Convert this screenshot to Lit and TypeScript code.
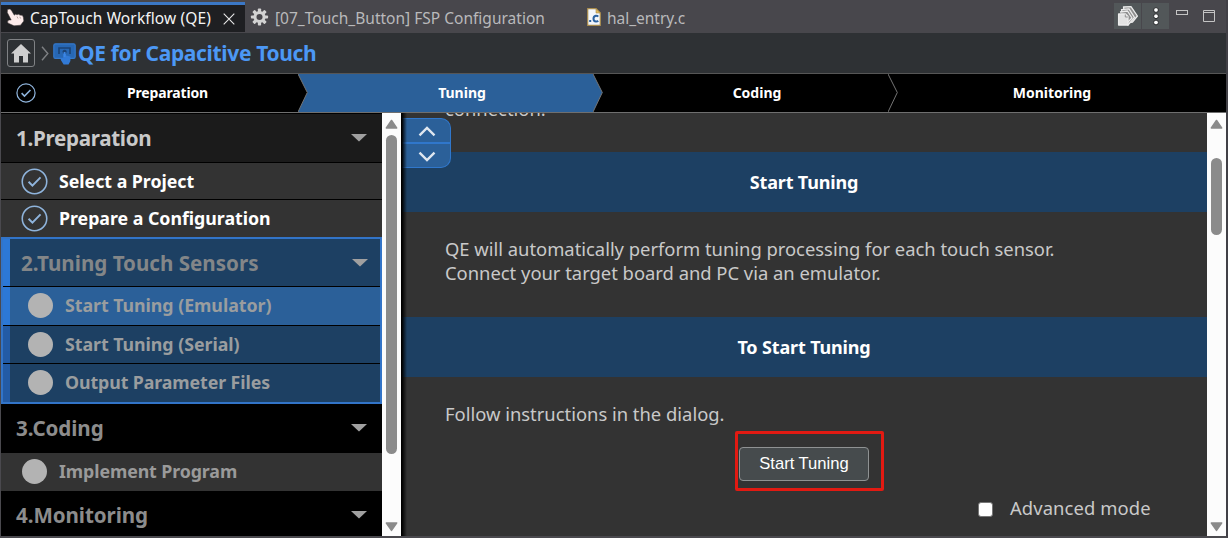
import { LitElement, html, svg, css, nothing } from "lit";
import { customElement } from "lit/decorators.js";
import { classMap } from "lit/directives/class-map.js";

interface Task {
  label: string;
  cls: string;
  done?: boolean;
  active?: boolean;
}
interface Section {
  title: string;
  cls: string;
  tasks: Task[];
}

const sections: Section[] = [
  {
    title: "1.Preparation",
    cls: "prep",
    tasks: [
      { label: "Select a Project", cls: "t1", done: true },
      { label: "Prepare a Configuration", cls: "t2", done: true },
    ],
  },
  {
    title: "2.Tuning Touch Sensors",
    cls: "tuning",
    tasks: [
      { label: "Start Tuning (Emulator)", cls: "t3", active: true },
      { label: "Start Tuning (Serial)", cls: "t4" },
      { label: "Output Parameter Files", cls: "t5" },
    ],
  },
  { title: "3.Coding", cls: "coding", tasks: [{ label: "Implement Program", cls: "t6" }] },
  { title: "4.Monitoring", cls: "monitoring", tasks: [] },
];

const steps = ["Preparation", "Tuning", "Coding", "Monitoring"];

const check = (size: number, stroke: number) => html`
  <svg class="check" width=${size} height=${size} viewBox="0 0 26 26" fill="none" stroke="#8fb4dc">
    <circle cx="13" cy="13" r="11.8" stroke-width=${stroke} />
    <path d="M7.3 13.2 L11 17 L18.8 9" stroke-width=${stroke * 1.25} />
  </svg>
`;

@customElement("scroll-bar")
export class ScrollBar extends LitElement {
  static styles = css`
    :host { display: flex; flex: none; flex-direction: column; align-items: center; width: 19px; background: #fcfcfc; box-sizing: border-box; padding: 6px 0 4px; }
    svg { display: block; flex: none; }
    .track { flex: 1; width: 11px; display: flex; flex-direction: column; }
    ::slotted(*) { width: 11px; border-radius: 6px; background: #8b8b8b; }
  `;
  render() {
    return html`
      <svg width="13" height="11"><path d="M6.5 1.5 L11.6 9 H1.4 Z" fill="#8b8b8b" stroke="#8b8b8b" stroke-width="1.6" stroke-linejoin="round" /></svg>
      <div class="track"><slot></slot></div>
      <svg width="13" height="11"><path d="M6.5 9.3 L11.6 2 H1.4 Z" fill="#8b8b8b" stroke="#8b8b8b" stroke-width="1.6" stroke-linejoin="round" /></svg>
    `;
  }
}

@customElement("app-root")
export class AppRoot extends LitElement {
  static styles = css`
    * { box-sizing: border-box; }
    :host { box-sizing: border-box; display: flex; flex-direction: column; width: 1228px; height: 538px; overflow: hidden; background: #2e3134; border: solid #4a494e; border-width: 0 2px 2px 1px; border-right-color: #414046; font-family: "Noto Sans", "Open Sans", sans-serif; color: #fff; white-space: nowrap; }
    svg { display: block; flex: none; }

    .tabs { display: flex; flex: none; height: 33px; background: #48474c; padding-top: 2px; font-size: 15.5px; color: #b9b9bb; }
    .tab { display: flex; align-items: center; padding-bottom: 1px; }
    .tab.active { width: 244px; height: 30px; background: #1e1f22; border-top: 3px solid #3b78c6; color: #f4f4f4; padding: 0 0 0 5px; }
    .tab.active svg.hand { margin-right: 5px; margin-bottom: 2px; }
    .tab.active svg.close { margin-left: 12px; }
    .tab span { line-height: 22px; padding-top: 2px; }
    .tab.active span { padding: 0 0 1px; }
    .captouch { width: 181px; letter-spacing: .12px; }
    .fsp { margin: 0 41px 0 6px; width: 271px; letter-spacing: .01px; }
    .tab.second { padding-left: 5px; }
    .hal { margin-left: 6px; letter-spacing: -.02px; }
    .tools { margin-left: auto; display: flex; padding-top: 1px; padding-right: 11px; }
    .tool { width: 27px; height: 26px; background: #525759; display: flex; align-items: center; justify-content: center; margin-right: 1px; }
    .tools .min { margin: 7px 0 0 6px; }
    .tools .max { margin: 7px 0 0 15px; }

    .crumbs { display: flex; flex: none; height: 40px; align-items: center; padding: 0 0 0 6px; }
    .home { width: 28px; height: 28px; border: 1px solid #808285; border-radius: 3px; display: flex; align-items: center; justify-content: center; }
    .crumbs .gt { margin: 0 4px 0 6px; }
    .pad { margin-top: 2px; }
    .title { font-size: 21px; font-weight: 700; letter-spacing: -.34px; color: #4c98f5; margin-left: 2px; line-height: 36px; }

    .steps { display: grid; flex: none; grid-template-columns: 297px 295px 295px 1fr; height: 40px; border: solid #6f6f6f; border-width: 1px 0 1px; border-top-color: #565656; background: #000; }
    .step { display: flex; align-items: center; justify-content: center; position: relative; font-weight: 700; font-size: 14px; padding-left: 33px; }
    .step span { margin-bottom: 2px; }
    .step:first-child { padding-left: 15px; justify-content: flex-start; }
    .step:first-child span { margin-left: 91px; letter-spacing: -.16px; }
    .step:last-child { padding: 0 10px 0 0; }
    .step.active { background: #2b6099; }
    .step .tip { position: absolute; right: -10px; top: 0; z-index: 1; }

    .work { display: flex; flex: 1; min-height: 0; }
    .side { width: 381px; overflow: hidden; padding-top: 1px; background: #000; flex: none; }
    .head { display: flex; align-items: center; justify-content: space-between; height: 49px; padding: 0 15px 0 15px; font-size: 20.6px; font-weight: 700; color: #8c8c8c; border-bottom: 1px solid #000; background: #000; }
    .head span { letter-spacing: -.08px; }
    .prep .head { background: #1b1b1b; color: #c9c9c9; }
    .prep .head span { letter-spacing: -.3px; }
    .task { display: flex; align-items: center; height: 37px; background: #333; border-bottom: 1px solid #000; font-size: 17.8px; font-weight: 700; color: #9a9a9a; padding-left: 20px; }
    .task span { margin: 0 0 1px 11px; letter-spacing: -.1px; }
    .task.done { color: #fff; }
    .prep .task:last-child { border-bottom: 0; }
    .dot { width: 25px; height: 25px; border-radius: 50%; background: #b3b3b3; margin: 0 1px; }
    .tuning { border: 2px solid #3274c8; }
    .tuning .head { height: 48px; background: #1d4063; box-shadow: inset 7px 0 #2c78d6; padding: 0 12px 0 18px; color: #838688; }
    .tuning .head span { letter-spacing: 0; }
    .tuning .task { background: #1d4063; box-shadow: inset 7px 0 #235ba5; height: 38px; padding: 0 0 1px 24px; color: #9a9d9f; }
    .tuning .task.active { background: #2b6099; box-shadow: inset 7px 0 #2c78d6; height: 39px; padding-bottom: 2px; }
    .tuning .task:last-child { border-bottom: 0; height: 38px; padding-bottom: 2px; }
    .coding .task { height: 38px; border-bottom: 0; padding-bottom: 1px; }
    .coding .head { border-bottom: 0; padding-bottom: 1px; }
    .task.t3 span, .task.t4 span { letter-spacing: -.04px; }
    .task.t1 span, .task.t2 span { letter-spacing: -.03px; }
    .thumb-side { height: 319px; margin-top: 5px; }
    .thumb-main { height: 77px; margin-top: 28px; }

    .main { position: relative; flex: 1; min-width: 0; overflow: hidden; background: #333; color: #c9c9c9; font-size: 18.4px; line-height: 24px; }
    .main::before { content: ""; position: absolute; z-index: 3; left: 0; top: 0; bottom: 0; width: 6px; background: linear-gradient(90deg, #000 15%, rgba(0,0,0,0)); }
    .cut { height: 39px; padding-left: 44px; overflow: hidden; }
    .cut p { margin: -16px 0 0; }
    .band { height: 60px; background: #1d4063; color: #fff; font-weight: 700; font-size: 18px; letter-spacing: -.15px; line-height: 61px; text-align: center; }
    .desc { height: 105px; padding: 25px 44px 0; letter-spacing: -.01px; }
    .run { padding: 25px 44px 0; }
    .frame { display: flex; width: 149px; height: 60px; margin: 5px 0 0 290px; border: 3px solid #e21a12; border-radius: 2px; padding: 13px 0 0 1px; }
    button { width: 130px; height: 34px; border: 1px solid #8f9293; border-radius: 4px; background: #464b4d; color: #fff; font: 16.6px "Liberation Sans", Arial, sans-serif; padding: 0; }
    .adv { display: flex; align-items: center; margin: 5px 0 0 533px; }
    .adv i { width: 15px; height: 15px; border: 1px solid #767676; border-radius: 3px; background: #fff; margin: 2px 17px 0 0; }
    .adv span { letter-spacing: .1px; }
    .jump { position: absolute; z-index: 2; left: 0; top: 5px; width: 50px; height: 50px; background: #2b6099; border: 1px solid #3077cb; border-left: 0; border-radius: 0 10px 10px 0; display: flex; flex-direction: column; }
    .jump div { flex: 1; display: flex; align-items: center; justify-content: center; padding: 1px 0 0 2px; }
    .jump div + div { border-top: 2px solid #3077cb; }
  `;

  private caret() {
    return html`<svg width="16" height="8"><path d="M0 0 H16 L8 7.5 Z" fill="#a0a0a0" /></svg>`;
  }

  private renderTip(i: number) {
    if (i === 3) return nothing;
    return html`<svg class="tip" width="10" height="38">
      ${svg`<path d="M0 0 L9.3 18.5 L0 38" fill=${i === 1 ? "#2b6099" : "#000"} stroke="#747474" stroke-width="1" />`}
    </svg>`;
  }

  render() {
    return html`
      <div class="tabs">
        <div class="tab active">
          <svg class="hand" width="19" height="19" viewBox="0 0 19 19">
            <path d="M1.5 1.5 Q4 .3 5.5 2.5 L8.3 7.2 Q9.5 5.5 11 6.8 Q12.8 5.6 14 7.2 Q16.5 6.5 17.3 9 L17.8 13 L14.5 17.2 L8 17.8 L1.8 15 Q1 12 3.5 12 L5.2 12 L1.3 4.5 Z" fill="#fdeceb" stroke="#3a3435" stroke-width=".5" />
            <path d="M11 8.5 L12 10.5 M13.8 8.8 L14.6 10.5" stroke="#a58e8c" stroke-width=".8" fill="none" />
          </svg>
          <span class="captouch">CapTouch Workflow (QE)</span>
          <svg class="close" width="12" height="12"><path d="M.7 .7 L11.3 11.3 M11.3 .7 L.7 11.3" stroke="#e8e8e8" stroke-width="1.1" /></svg>
        </div>
        <div class="tab second">
          <svg width="19" height="20" viewBox="-10 -10 20 20">
            <g fill="#d2d2d2">
              ${[0, 45, 90, 135].map((a) => svg`<rect x="-1.7" y="-9" width="3.4" height="18" rx=".8" transform="rotate(${a})" />`)}
              <circle r="6.4" />
            </g>
            <circle r="3.2" fill="#48474c" />
          </svg>
          <span class="fsp">[07_Touch_Button] FSP Configuration</span>
        </div>
        <div class="tab">
          <svg width="14" height="18" viewBox="0 0 14 18">
            <path d="M.7 .7 H9 L13.3 5 V17.3 H.7 Z" fill="#f3f6fb" stroke="#a98c4c" stroke-width="1.2" />
            <path d="M9 .7 V5 H13.3 Z" fill="#e0b95e" stroke="#a98c4c" stroke-width=".6" />
            <rect x="2.2" y="12" width="2" height="2" fill="#2c62a0" />
            <path d="M11.2 8.7 Q10.3 7.6 8.8 7.8 Q6.5 8.2 6.5 10.8 Q6.5 13.4 8.9 13.5 Q10.3 13.6 11.2 12.7" fill="none" stroke="#2c62a0" stroke-width="2" />
          </svg>
          <span class="hal">hal_entry.c</span>
        </div>
        <div class="tools">
          <div class="tool">
            <svg width="22" height="22" viewBox="0 0 22 22" fill="#8e8e8e" stroke="#ececec" stroke-width="1.3" stroke-linejoin="round">
              <path d="M6.5 2 L14 1.6 L20.4 11 L15.5 17 L9 18 Z" />
              <path d="M4.5 4.6 L12 3.8 L17.5 12.5 L11 20 L7 17 Z" />
              <path d="M3 7 L10.5 6 L15 13 L10 18" />
              <path d="M1.6 9 H8.5 L11 11.5 V20 H1.6 Z" fill="#e2e2e2" />
              <path d="M8.3 9.5 V12 H10.8" stroke="#8a8a8a" stroke-width=".9" fill="none" />
            </svg>
          </div>
          <div class="tool">
            <svg width="8" height="20" fill="#fff" stroke="#26282a" stroke-width="1">
              <circle cx="4" cy="4" r="2.4" /><circle cx="4" cy="10.2" r="2.4" /><circle cx="4" cy="16.5" r="2.4" />
            </svg>
          </div>
          <svg class="min" width="12" height="5"><rect x=".5" y=".5" width="11" height="4" fill="none" stroke="#c4c4c4" /></svg>
          <svg class="max" width="12" height="12"><path d="M.5 .5 H11.5 V11.5 H.5 Z M.5 2.5 H11.5" fill="none" stroke="#c4c4c4" /></svg>
        </div>
      </div>

      <div class="crumbs">
        <div class="home">
          <svg width="20" height="19"><path d="M10 0 L20 9.5 H17 V18.5 H12 V12 H8 V18.5 H3 V9.5 H0 Z" fill="#cfcfcf" /></svg>
        </div>
        <svg class="gt" width="8" height="15"><path d="M1 .8 L6.8 7.5 L1 14.2" fill="none" stroke="#7e8083" stroke-width="1.4" /></svg>
        <svg class="pad" width="23" height="22" viewBox="0 0 23 22">
          <rect x=".8" y=".8" width="21.4" height="14.6" rx="1.6" fill="#2767b4" stroke="#3478ca" stroke-width="1.2" />
          <path d="M6 11 V5 H17 V11" fill="none" stroke="#1c4374" stroke-width="1.6" />
          <path d="M10.2 8 Q11.6 6.6 13 8 V12.5 L17.4 13.6 V18 L15.6 21.4 H10.6 L7.8 17 V14.8 L10.2 15.5 Z" fill="#327ad6" />
          <circle cx="11.6" cy="8.8" r="2.1" fill="#1c4374" />
          <path d="M11.6 9 V14" stroke="#3c86e4" stroke-width="1.8" />
        </svg>
        <span class="title">QE for Capacitive Touch</span>
      </div>

      <div class="steps">
        ${steps.map(
          (s, i) => html`<div class=${classMap({ step: true, active: i === 1 })}>${i === 0 ? check(20, 1.6) : nothing}<span>${s}</span>${this.renderTip(i)}</div>`
        )}
      </div>

      <div class="work">
        <div class="side">
          ${sections.map(
            (s) => html`<section class=${s.cls}>
              <div class="head"><span>${s.title}</span>${this.caret()}</div>
              ${s.tasks.map(
                (t) => html`<div class=${classMap({ task: true, [t.cls]: true, done: !!t.done, active: !!t.active })}>
                  ${t.done ? check(27, 1.5) : html`<div class="dot"></div>`}<span>${t.label}</span>
                </div>`
              )}
            </section>`
          )}
        </div>
        <scroll-bar><div class="thumb-side"></div></scroll-bar>
        <div class="main">
          <div class="jump">
            <div><svg width="18" height="11"><path d="M1.5 9.3 L9 2 L16.5 9.3" fill="none" stroke="#dfe7f0" stroke-width="2.4" /></svg></div>
            <div><svg width="18" height="11"><path d="M1.5 1.7 L9 9 L16.5 1.7" fill="none" stroke="#dfe7f0" stroke-width="2.4" /></svg></div>
          </div>
          <div class="cut"><p>connection.</p></div>
          <div class="band">Start Tuning</div>
          <div class="desc">
            <div>QE will automatically perform tuning processing for each touch sensor.</div>
            <div class="b">Connect your target board and PC via an emulator.</div>
          </div>
          <div class="band">To Start Tuning</div>
          <div class="run">
            <div>Follow instructions in the dialog.</div>
            <div class="frame"><button>Start Tuning</button></div>
            <div class="adv"><i></i><span>Advanced mode</span></div>
          </div>
        </div>
        <scroll-bar><div class="thumb-main"></div></scroll-bar>
      </div>
    `;
  }
}
